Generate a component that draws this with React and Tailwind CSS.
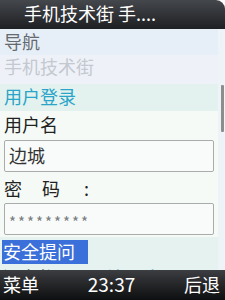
export default function App() {
  const font = { fontFamily: '"Noto Sans CJK SC", "Noto Sans", sans-serif' };
  return (
    <div className="w-[225px] h-[300px] flex flex-col bg-white overflow-hidden" style={font}>
      <div className="h-[29px] shrink-0 rounded-tr-[9px] bg-gradient-to-b from-[#44474c] to-[#1e2023] text-white text-[18px] leading-[26px] pl-[24px] whitespace-nowrap">
        手机技术街 手....
      </div>
      <div className="flex-1 flex min-h-0 bg-[#eef3f6]">
        <div className="flex-1 flex flex-col min-w-0 overflow-hidden">
          <div className="h-[26px] shrink-0 bg-[#e6eff8] text-[#666a6e] text-[18px] leading-[24px] pl-[4px]">导航</div>
          <div className="h-[29px] shrink-0 bg-[#eef2f8] text-[#c4c8d0] text-[18px] leading-[22px] pl-[4px]">手机技术街</div>
          <div className="h-[27px] shrink-0 bg-[#e3f2ee] text-[#2aa4c8] text-[18px] leading-[24px] pl-[4px]">用户登录</div>
          <div className="shrink-0 bg-[#f5faf7] pb-[2px]">
            <div className="h-[27px] text-[#222] text-[18px] leading-[26px] pl-[4px]">用户名</div>
            <div className="mx-[4px] mt-[2px] h-[32px] border border-[#a9acab] rounded-[2px] bg-[#f8fbf9] text-[#333] text-[18px] leading-[28px] pl-[4px]">边城</div>
            <div className="h-[31px] flex items-center text-[#222] text-[18px] pl-[4px] pt-[1px]">
              <span className="w-[38px]">密</span>
              <span className="w-[42px]">码</span>
              <span>:</span>
            </div>
            <div className="mx-[4px] h-[32px] border border-[#a9acab] rounded-[2px] bg-[#f8fbf9] text-[#7a7d80] text-[15px] leading-[28px] pl-[4px] pt-[4px] tracking-[2px]">*********</div>
          </div>
          <div className="shrink-0 bg-[#e6f2f0] pt-[3px] pl-[2px]">
            <div className="inline-block w-[86px] h-[24px] bg-[#3b6fd9] text-white text-[18px] leading-[22px] pl-[1px]">安全提问</div>
          </div>
          <div className="shrink-0 bg-[#e6f2f0] h-[30px] text-[18px] leading-[26px] pl-[3px] whitespace-nowrap">
            <span className="text-[#333]">没有帐号？</span>
            <span className="text-[#2aa4c8] ml-[14px]">注册会员</span>
          </div>
        </div>
        <div className="w-[7px] shrink-0 bg-[#eef3f8] flex flex-col">
          <div className="h-[56px]" />
          <div className="ml-[3px] w-[3px] h-[47px] bg-[#8c8e8e] rounded-[1px]" />
        </div>
      </div>
      <div className="h-[30px] shrink-0 bg-gradient-to-b from-[#3c3e42] to-[#0e0f10] text-white text-[18px] leading-[28px] flex justify-between px-[3px]">
        <span>菜单</span>
        <span className="text-[19px]">23:37</span>
        <span className="pr-[2px]">后退</span>
      </div>
    </div>
  );
}
